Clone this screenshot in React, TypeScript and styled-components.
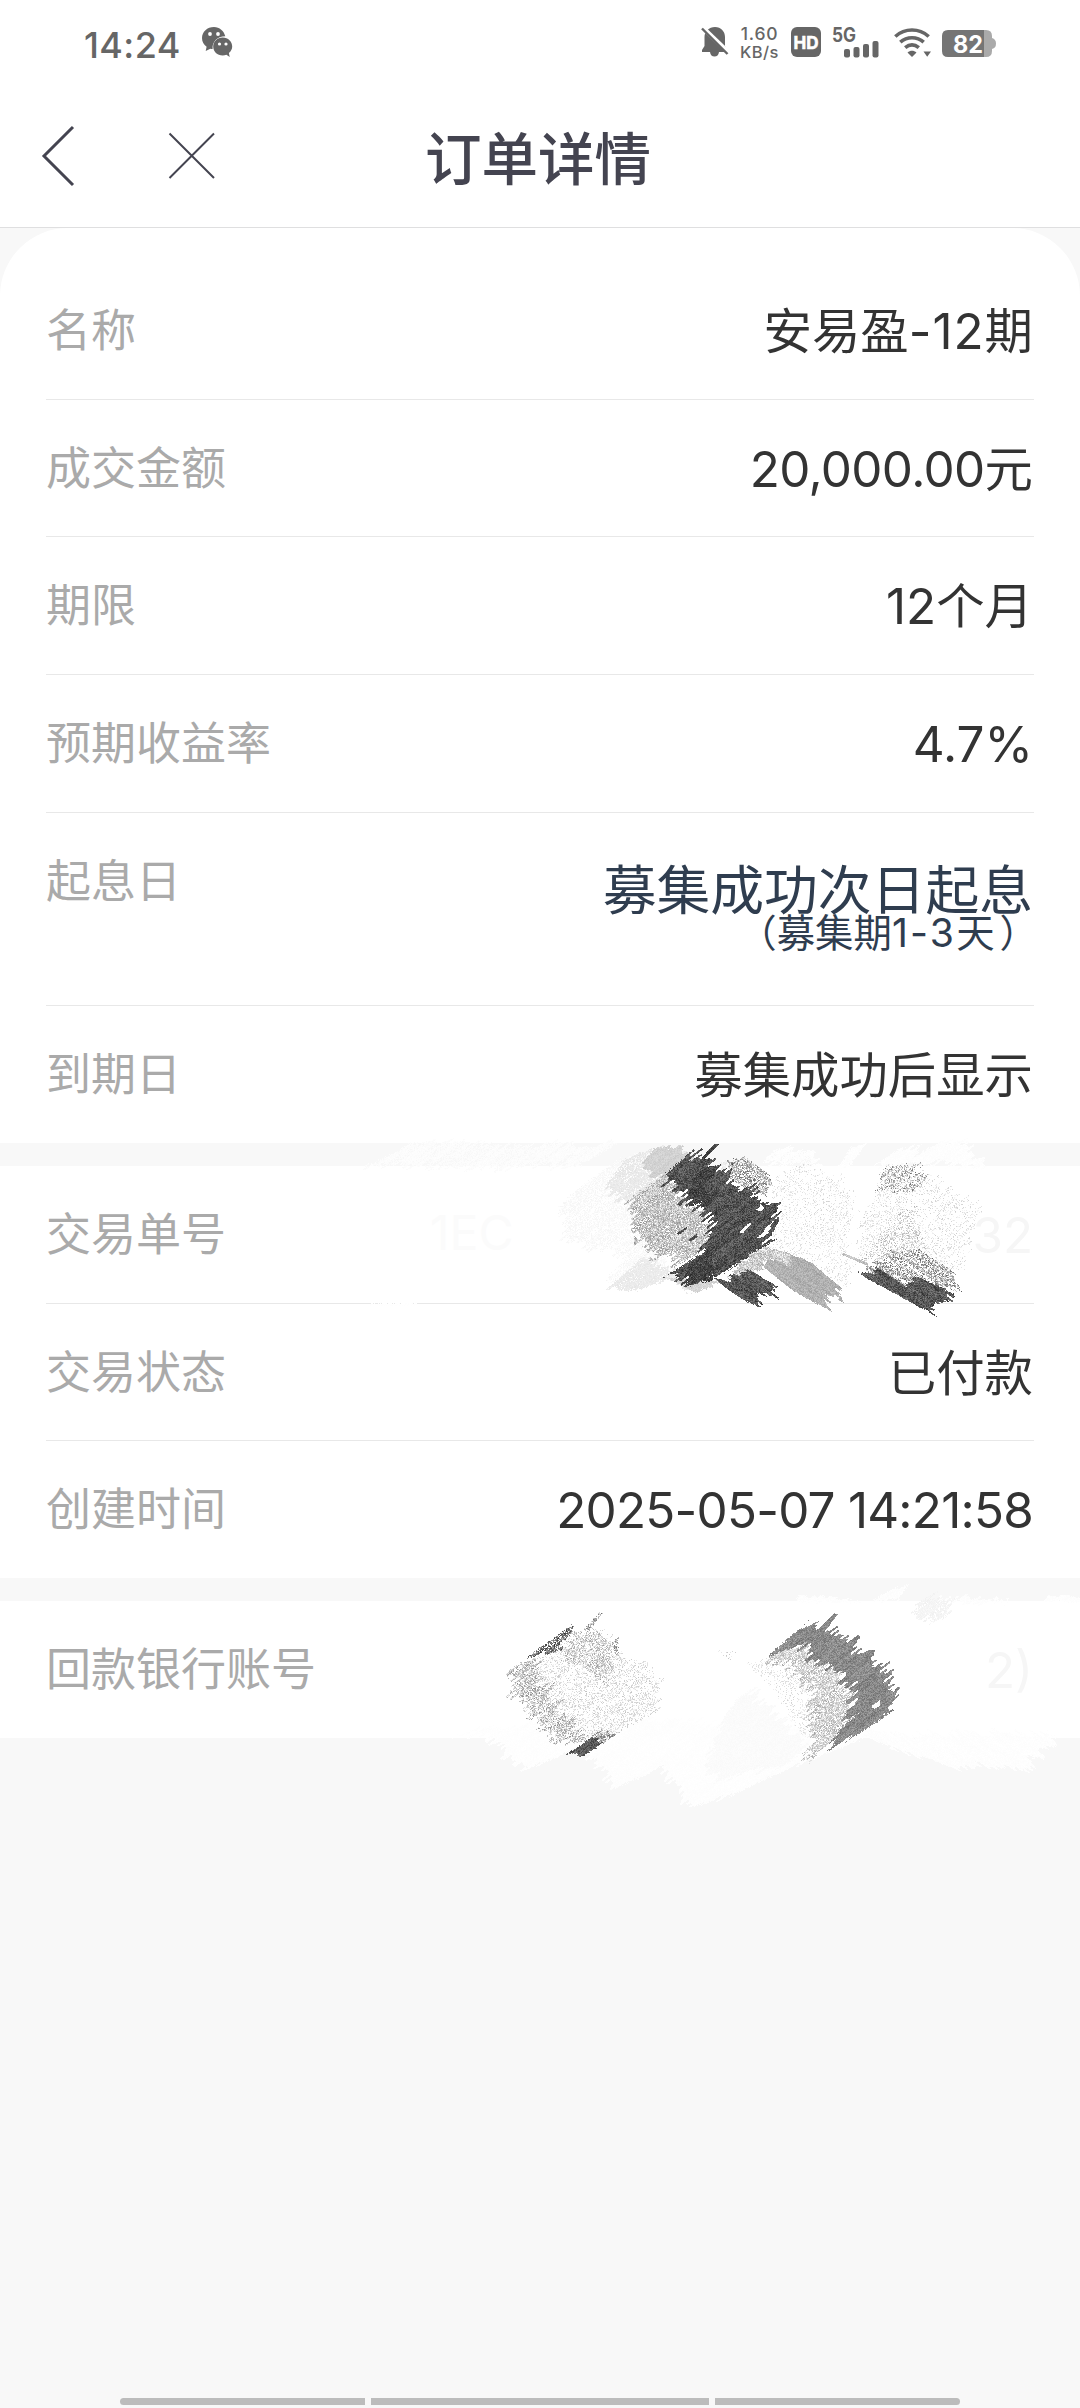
import React, { useMemo } from "react";
import styled, { createGlobalStyle } from "styled-components";

const Global = createGlobalStyle`
  * { box-sizing: border-box; }
  body { margin: 0; background: #f8f8f8; }
`;

const Screen = styled.div`
  width: 1080px;
  height: 2408px;
  display: flex;
  flex-direction: column;
  background: #f8f8f8;
  overflow: hidden;
  font-family: "Noto Sans CJK SC", "Noto Sans", sans-serif;
`;

const StatusBar = styled.div`
  height: 84px;
  flex: none;
  display: flex;
  align-items: flex-start;
  justify-content: space-between;
  padding: 27px 84px 0 84px;
  background: #fff;
  color: #666;
  font-family: Inter, sans-serif;
`;

const StatusGroup = styled.div<{ $gap: number }>`
  display: flex;
  align-items: flex-start;
  gap: ${(p) => p.$gap}px;
`;

const Clock = styled.span`
  width: 98px;
  font-size: 36px;
  line-height: 36px;
  font-weight: 500;
  letter-spacing: 0.4px;
  white-space: nowrap;
`;

const Speed = styled.div`
  width: 39px;
  margin-top: -4px;
  display: flex;
  flex-direction: column;
  align-items: center;
  font-size: 16.5px;
  line-height: 16px;
  font-weight: 500;
  letter-spacing: 0.4px;
  white-space: nowrap;
`;

const SpeedFigure = styled.span`
  font-size: 17.5px;
  line-height: 21px;
  letter-spacing: 0.8px;
`;

const Icon = styled.svg`
  display: block;
  flex: none;
`;

const Header = styled.header`
  height: 144px;
  flex: none;
  display: grid;
  grid-template-columns: 425px 1fr 429px;
  align-items: center;
  background: #fff;
  border-bottom: 1px solid #dfdfe0;
`;

const HeaderActions = styled.div`
  display: flex;
  align-items: center;
  gap: 93px;
  padding-left: 41px;
`;

const Title = styled.h1`
  margin: 0 0 2px;
  text-align: center;
  font-size: 56.5px;
  line-height: 80px;
  font-weight: 500;
  color: #444450;
  white-space: nowrap;
`;

const Section = styled.section<{ $first?: boolean }>`
  position: relative;
  flex: none;
  margin-bottom: 23px;
  padding: ${(p) => (p.$first ? "34px 46px 0" : "0 46px")};
  border-radius: ${(p) => (p.$first ? "68px 68px 0 0" : "0")};
  background: #fff;
`;

const Row = styled.div<{ $tall?: boolean; $last?: boolean }>`
  display: flex;
  justify-content: space-between;
  align-items: flex-start;
  height: ${(p) => (p.$tall ? 193.6 : p.$last ? 136.6 : 137.7)}px;
  border-bottom: ${(p) => (p.$last ? "none" : "1px solid #e8e8e8")};
`;

const Label = styled.span`
  font-size: 45px;
  line-height: 132px;
  color: #aaa;
`;

const Value = styled.span<{ $ghost?: boolean }>`
  padding-right: 1px;
  font-size: 48.4px;
  line-height: 133px;
  color: ${(p) => (p.$ghost ? "#f6f6f6" : "#333")};
  white-space: nowrap;
`;

const Num = styled.span<{ $track?: number }>`
  font-family: Inter, sans-serif;
  font-size: 1.02em;
  letter-spacing: ${(p) => p.$track ?? 0}px;
`;

const Start = styled.div`
  display: flex;
  flex-direction: column;
  align-items: flex-end;
  padding: 50px 1px 0 0;
  color: #2f3d4f;
  white-space: nowrap;
`;

const StartMain = styled.span`
  font-size: 53.8px;
  line-height: 48px;
`;

const StartNote = styled.span`
  font-size: 38.4px;
  line-height: 39px;
`;

const CloseParen = styled.span`
  padding-left: 5px;
  margin-right: -5px;
`;

const Scribble = styled.svg<{ $left: number; $top: number }>`
  position: absolute;
  left: ${(p) => p.$left}px;
  top: ${(p) => p.$top}px;
  pointer-events: none;
`;

const NavBar = styled.div`
  margin-top: auto;
  display: flex;
  justify-content: center;
  gap: 6px;
  padding-bottom: 3px;
`;

const NavPill = styled.div<{ $w: number; $side?: "l" | "r" }>`
  width: ${(p) => p.$w}px;
  height: 7px;
  background: #bcbcbc;
  border-radius: ${(p) => (p.$side === "l" ? "4px 0 0 4px" : p.$side === "r" ? "0 4px 4px 0" : "0")};
`;

/* ---- crayon strokes: grains of 3 units laid out inside jagged outlines ---- */

type Pt = [number, number];
interface Patch {
  pts: Pt[];
  lo: number;
  hi: number;
  density?: number;
  jag?: number;
  streak?: number;
  down?: boolean;
}

const rand = (a: number, b: number) => {
  let h = Math.imul(a | 0, 374761393) ^ Math.imul(b | 0, 668265263);
  h = Math.imul(h ^ (h >>> 13), 1274126177);
  return ((h ^ (h >>> 16)) >>> 0) / 4294967296;
};

const smooth = (v: number, seed: number) => {
  const i = Math.floor(v);
  const f = v - i;
  return rand(i, seed) * (1 - f) + rand(i + 1, seed) * f;
};

const inside = (x: number, y: number, pts: Pt[]) => {
  let hit = false;
  for (let i = 0, j = pts.length - 1; i < pts.length; j = i++) {
    const [xi, yi] = pts[i];
    const [xj, yj] = pts[j];
    if (yi > y !== yj > y && x < ((xj - xi) * (y - yi)) / (yj - yi) + xi) hit = !hit;
  }
  return hit;
};

const renderPatch = (p: Patch, seed: number) => {
  const levels = 7;
  const buckets: string[] = Array(levels).fill("");
  const xs = p.pts.map((q) => q[0]);
  const ys = p.pts.map((q) => q[1]);
  const jag = p.jag ?? 34;
  const density = p.density ?? 1;
  const streak = p.streak ?? 0.35;
  const dx = 0.8;
  const dy = p.down ? 0.6 : -0.6;
  const x0 = Math.floor((Math.min(...xs) - jag) / 3) * 3;
  const y0 = Math.floor((Math.min(...ys) - jag) / 3) * 3;
  for (let y = y0; y <= Math.max(...ys) + jag; y += 3) {
    for (let x = x0; x <= Math.max(...xs) + jag; x += 3) {
      const across = -x * dy + y * dx;
      const along = x * dx + y * dy;
      const side = Math.floor(along / 120);
      const fine = rand(Math.floor(across / 6), seed + side * 5) - 0.5;
      const coarse = smooth(across / 22, seed + 1) - 0.5;
      const push = (fine * 0.85 + coarse * 0.7) * jag * 1.25;
      const wob = (rand(x + seed, y * 3) - 0.5) * Math.min(5, jag / 4);
      if (!inside(x + dx * push + wob, y + dy * push + wob, p.pts)) continue;
      const line = smooth(across / 5 + smooth(along / 60, seed + 3), seed + 7 + Math.floor(along / 70));
      const keep = density >= 1 ? 1 : density * (1 - streak + streak * 2 * line);
      if (rand(x * 7 + seed, y * 13) > keep) continue;
      const r = rand(x + seed * 31, y * 3 + 5);
      const tone = Math.min(levels - 1, Math.floor((r * 0.7 + line * 0.3) * levels));
      buckets[tone] += `M${x} ${y}h3v3h-3z`;
    }
  }
  return buckets.map((d, i) => {
    const c = Math.round(p.lo + ((p.hi - p.lo) * i) / (levels - 1));
    return { d, fill: `rgb(${c},${c},${c})` };
  });
};

const orderScribble: Patch[] = [
  { pts: [[-590, 88], [-440, 20], [-100, 24], [170, 24], [60, 90], [-300, 92]], lo: 250, hi: 254, density: 0.85 },
  { pts: [[600, 88], [640, 40], [740, 45], [790, 88]], lo: 252, hi: 255, density: 0.9 },
  { pts: [[830, 88], [880, 25], [910, 30], [870, 88]], lo: 252, hi: 255 },
  { pts: [[940, 88], [1020, 35], [1080, 24], [1060, 60], [1130, 24], [1210, 24], [1290, 88]], lo: 252, hi: 255 },
  { pts: [[-570, 498], [-430, 498], [-430, 508], [-570, 508]], lo: 254, hi: 255, density: 0.7, jag: 4 },
  { pts: [[5, 205], [60, 150], [190, 60], [300, 40], [330, 200], [300, 330], [330, 400], [240, 460], [140, 430], [200, 360], [60, 330], [5, 290]], lo: 244, hi: 254, density: 0.65, streak: 0.6 },
  { pts: [[140, 145], [180, 75], [280, 35], [400, 60], [300, 150], [190, 205], [160, 180]], lo: 227, hi: 241, density: 0.92, streak: 0.5 },
  { pts: [[150, 450], [250, 360], [330, 385], [400, 465], [330, 430], [210, 465]], lo: 229, hi: 241, density: 0.95, jag: 28 },
  { pts: [[320, 425], [480, 430], [410, 472]], lo: 200, hi: 226, jag: 14, down: true },
  { pts: [[245, 80], [290, 30], [370, 30], [400, 70], [310, 130]], lo: 200, hi: 220, jag: 28 },
  { pts: [[195, 195], [320, 112], [350, 170], [440, 220], [440, 330], [345, 385], [270, 350], [215, 245]], lo: 148, hi: 244, density: 0.96, jag: 40 },
  { pts: [[635, 120], [740, 78], [850, 135], [890, 220], [850, 320], [880, 440], [800, 445], [740, 370], [620, 350], [655, 220]], lo: 210, hi: 253, density: 0.24, streak: 0.8 },
  { pts: [[600, 385], [650, 350], [750, 375], [850, 460], [845, 495], [790, 488], [800, 520], [700, 465]], lo: 158, hi: 198, jag: 34, down: true },
  { pts: [[510, 70], [560, 65], [632, 118], [618, 180], [560, 160], [500, 120]], lo: 110, hi: 252, density: 0.75, jag: 18, down: true },
  { pts: [[295, 130], [385, 50], [398, 65], [425, 58], [450, 85], [510, 90], [530, 140], [600, 185], [635, 225], [632, 320], [500, 400], [375, 450], [322, 415], [430, 348], [445, 290], [430, 210], [350, 165]], lo: 48, hi: 122, jag: 50 },
  { pts: [[425, 62], [462, 22], [475, 24], [420, 78]], lo: 50, hi: 105, jag: 0 },
  { pts: [[615, 285], [650, 242], [658, 246], [640, 285]], lo: 55, hi: 115, jag: 6 },
  { pts: [[395, 110], [450, 95], [450, 210], [425, 215], [390, 190]], lo: 38, hi: 88, density: 0.8, jag: 40 },
  { pts: [[370, 400], [430, 350], [490, 390], [460, 430], [390, 435]], lo: 38, hi: 88, density: 0.8, jag: 36 },
  { pts: [[350, 205], [366, 188], [372, 192], [358, 210]], lo: 55, hi: 110, jag: 3 },
  { pts: [[350, 290], [376, 272], [380, 276], [356, 295]], lo: 55, hi: 110, jag: 3 },
  { pts: [[385, 310], [408, 292], [412, 300], [392, 315]], lo: 55, hi: 110, jag: 3 },
  { pts: [[535, 288], [568, 258], [572, 262], [548, 290]], lo: 240, hi: 255, jag: 2 },
  { pts: [[588, 305], [628, 270], [632, 275], [600, 305]], lo: 250, hi: 255, jag: 2 },
  { pts: [[475, 80], [495, 72], [500, 95], [485, 100]], lo: 225, hi: 255, jag: 8 },
  { pts: [[500, 430], [530, 385], [620, 335], [695, 355], [690, 390], [630, 370], [580, 415]], lo: 165, hi: 255, jag: 18, down: true },
  { pts: [[460, 425], [510, 425], [580, 410], [652, 450], [645, 482], [600, 480], [588, 512], [510, 465]], lo: 50, hi: 128, jag: 30, down: true },
  { pts: [[965, 92], [1070, 92], [1160, 145], [1250, 215], [1230, 320], [1215, 405], [1150, 400], [1060, 350], [890, 370], [900, 275], [945, 180]], lo: 205, hi: 253, density: 0.24, streak: 0.9 },
  { pts: [[900, 370], [1045, 200], [1080, 250], [1090, 360], [1000, 370]], lo: 165, hi: 248, density: 0.3, streak: 0.9 },
  { pts: [[965, 92], [1070, 88], [1095, 125], [1050, 175], [945, 160]], lo: 110, hi: 245, density: 0.42, streak: 0.8, jag: 28 },
  { pts: [[900, 400], [1000, 350], [1090, 350], [1195, 415], [1200, 465], [1100, 440], [1020, 440]], lo: 95, hi: 252, density: 0.68, streak: 0.6, jag: 34, down: true },
  { pts: [[850, 350], [920, 378], [925, 390], [845, 356]], lo: 170, hi: 225, jag: 4, down: true },
  { pts: [[895, 412], [965, 402], [1035, 450], [1080, 425], [1175, 468], [1168, 505], [1130, 502], [1118, 533], [1020, 482]], lo: 50, hi: 128, jag: 30, down: true },
];

const accountScribble: Patch[] = [
  { pts: [[-140, 405], [-20, 380], [300, 350], [900, 380], [1094, 410], [900, 490], [690, 585], [580, 620], [480, 500], [345, 565], [235, 440], [80, 508], [-30, 410]], lo: 253, hi: 255 },
  { pts: [[1080, 400], [1660, 400], [1650, 440], [1572, 515], [1450, 490], [1412, 510], [1180, 450]], lo: 252, hi: 255, down: true },
  { pts: [[880, 5], [890, -12], [980, -12], [1100, 5]], lo: 252, hi: 255, jag: 14 },
  { pts: [[1110, 5], [1150, -20], [1225, -50], [1190, 5]], lo: 252, hi: 255, jag: 26 },
  { pts: [[1300, 5], [1310, -12], [1480, -10], [1530, 5]], lo: 252, hi: 255, jag: 26 },
  { pts: [[1630, 5], [1640, -15], [1740, -10], [1740, 5]], lo: 252, hi: 255, jag: 10 },
  { pts: [[1235, 15], [1300, -20], [1350, -10], [1340, 50], [1290, 68]], lo: 240, hi: 249, density: 0.85, jag: 36 },
  { pts: [[620, 470], [690, 310], [750, 270], [930, 430], [860, 490], [640, 540]], lo: 249, hi: 253, jag: 40 },
  { pts: [[50, 215], [200, 110], [300, 95], [370, 170], [455, 195], [480, 260], [475, 330], [350, 400], [290, 420], [180, 420], [100, 340], [60, 280]], lo: 195, hi: 252, density: 0.36, streak: 0.8 },
  { pts: [[30, 205], [100, 165], [125, 240], [165, 320], [225, 390], [290, 420], [165, 430], [105, 355], [40, 270]], lo: 140, hi: 248, density: 0.66, streak: 0.5, jag: 40 },
  { pts: [[210, 90], [300, 95], [350, 150], [320, 260], [240, 190], [190, 190]], lo: 155, hi: 248, density: 0.52, streak: 0.6, jag: 30, down: true },
  { pts: [[68, 178], [155, 118], [215, 72], [222, 92], [185, 125], [178, 155], [120, 158]], lo: 50, hi: 190, density: 0.9, jag: 20 },
  { pts: [[250, 85], [298, 35], [308, 37], [265, 92]], lo: 110, hi: 240, density: 0.8, jag: 4 },
  { pts: [[335, 125], [358, 108], [352, 158], [338, 152]], lo: 110, hi: 240, density: 0.6, jag: 6 },
  { pts: [[270, 405], [300, 390], [350, 402], [310, 428]], lo: 100, hi: 235, density: 0.8, jag: 14 },
  { pts: [[200, 460], [272, 412], [308, 428], [245, 468]], lo: 62, hi: 125, jag: 14 },
  { pts: [[640, 150], [720, 148], [690, 182]], lo: 200, hi: 245, density: 0.1, jag: 4 },
  { pts: [[740, 190], [850, 170], [960, 320], [950, 420], [900, 400], [820, 270]], lo: 210, hi: 252, density: 0.25, streak: 0.8, down: true },
  { pts: [[805, 168], [880, 115], [950, 180], [1010, 205], [1060, 270], [1055, 350], [985, 430], [945, 472], [905, 465], [945, 420], [940, 320], [930, 250]], lo: 165, hi: 253, density: 0.85, jag: 44 },
  { pts: [[815, 158], [915, 70], [950, 75], [1005, 100], [1055, 130], [1105, 178], [1155, 205], [1180, 260], [1160, 345], [1080, 395], [980, 450], [1000, 405], [1055, 350], [1050, 270], [1000, 205], [935, 190], [890, 135]], lo: 110, hi: 165, jag: 44 },
  { pts: [[945, 95], [1002, 38], [1012, 42], [970, 95]], lo: 110, hi: 160, jag: 3 },
  { pts: [[1165, 290], [1192, 258], [1196, 264], [1180, 292]], lo: 110, hi: 165, jag: 4 },
  { pts: [[1112, 318], [1138, 298], [1136, 318], [1120, 326]], lo: 250, hi: 255, jag: 4 },
];

const Crayon = ({ patches, left, top, width, height, viewBox }: {
  patches: Patch[]; left: number; top: number; width: number; height: number; viewBox: string;
}) => {
  const drawn = useMemo(() => patches.map((p, i) => renderPatch(p, i * 17 + 11)), [patches]);
  return (
    <Scribble $left={left} $top={top} width={width} height={height} viewBox={viewBox} shapeRendering="crispEdges">
      {drawn.map((levels, i) => (
        <g key={i}>
          {levels.map((l, j) => (l.d ? <path key={j} d={l.d} fill={l.fill} /> : null))}
        </g>
      ))}
    </Scribble>
  );
};

const GhostLead = styled.span`
  flex: 1;
  padding-left: 204px;
  font-family: Inter, sans-serif;
  font-size: 48px;
  line-height: 133px;
  color: #fbfbfb;
`;

const StatusText = styled.text`
  font-family: Inter, sans-serif;
  font-weight: 700;
`;

const WeChat = () => (
  <Icon width="31" height="31" viewBox="0 0 31 31">
    <path fill="#666" d="M12 0C5.200 0 0 4.800 0 11c0 3.700 1.800 6.700 4.600 8.800L3.700 24l4.600-2.300c.8.200 1.600.3 2.300.3C10 15 15 9.500 23.300 9.300 22 4 17.500 0 12 0z" />
    <circle cx="8" cy="7" r="1.900" fill="#fff" /><circle cx="16" cy="7" r="1.900" fill="#fff" />
    <path fill="#666" d="M20.700 10.500c-5.400 0-9.500 4-9.500 9s4.100 9 9.500 9c1.300 0 2.500-.2 3.700-.7l3.300 2.200-.8-4c2-1.600 3.300-3.900 3.300-6.500 0-5-4.100-9-9.500-9z" />
    <circle cx="17.500" cy="17" r="1.600" fill="#fff" /><circle cx="24" cy="17" r="1.600" fill="#fff" />
  </Icon>
);

const BellOff = () => (
  <Icon width="28" height="30" viewBox="0 0 28 30">
    <path fill="#666" d="M14 0c6 0 10 4.500 10 10v9l2.500 5v1H18c-.4 3-2 4.500-4.500 4.500S9.400 28 9 25H1v-2l2.500-4V10C3.500 4.500 8 0 14 0z" />
    <path d="M-1 -2L27 25" stroke="#fff" strokeWidth="4.500" />
    <path d="M1 1.500L26.500 27" stroke="#666" strokeWidth="2.400" />
  </Icon>
);

const Hd = () => (
  <Icon width="30" height="30" viewBox="0 0 30 30">
    <rect width="30" height="30" rx="6" fill="#666" />
    <StatusText x="15" y="21.500" fontSize="18" fill="#fff" stroke="#fff" strokeWidth=".6" textAnchor="middle" textLength="25" lengthAdjust="spacingAndGlyphs">HD</StatusText>
  </Icon>
);

const Signal = () => (
  <Icon width="50" height="31" viewBox="2 0 50 31">
    <StatusText x="2" y="14.500" fontSize="19.500" fill="#666" textLength="24" lengthAdjust="spacingAndGlyphs">5G</StatusText>
    <rect x="14" y="22" width="6" height="8.500" rx="2" fill="#666" />
    <rect x="23.500" y="20" width="6" height="10.500" rx="2" fill="#666" />
    <rect x="33" y="17" width="6" height="13.500" rx="2" fill="#666" />
    <rect x="42.500" y="14" width="6" height="16.500" rx="2" fill="#666" />
  </Icon>
);

const Wifi = () => (
  <Icon width="37" height="30" viewBox="0 0 37 30">
    <g fill="none" stroke="#666" strokeWidth="3.600">
      <path d="M1.300 9.500C11 .9 25 .9 34.700 9.500" />
      <path d="M6.300 15.200C13 9.200 23 9.200 29.700 15.200" />
      <path d="M11.200 20.700C15.500 17 20.500 17 24.800 20.700" />
    </g>
    <path fill="#666" d="M13.500 25.500c2.800-2.300 6.200-2.300 9 0L18 30zM29.500 24.500H37L33.200 29.800z" />
  </Icon>
);

const Battery = () => (
  <Icon width="54" height="30" viewBox="0 0 54 30">
    <path fill="#aaa" d="M40 3h4q6 0 6 6v2q4 1 4 5.500T50 22v2q0 6-6 6h-4z" />
    <path fill="#757575" d="M6 3h36v27H6q-6 0-6-6V9q0-6 6-6z" />
    <StatusText x="26" y="25.500" fontSize="24.500" fill="#fff" textAnchor="middle" textLength="30" lengthAdjust="spacingAndGlyphs">82</StatusText>
  </Icon>
);

export default function App() {
  return (
    <Screen>
      <Global />
      <StatusBar>
        <StatusGroup $gap={20}>
          <Clock>14:24</Clock>
          <WeChat />
        </StatusGroup>
        <StatusGroup $gap={11.5}>
          <BellOff />
          <Speed><SpeedFigure>1.60</SpeedFigure><span>KB/s</span></Speed>
          <Hd />
          <Signal />
          <Wifi />
          <Battery />
        </StatusGroup>
      </StatusBar>
      <Header>
        <HeaderActions>
          <Icon width="34" height="62" viewBox="0 0 34 62">
            <path d="M32 2L3 31L32 60" fill="none" stroke="#444450" strokeWidth="3" />
          </Icon>
          <Icon width="48" height="48" viewBox="0 0 48 48">
            <path d="M1.500 1.500L46 46M46 1.500L1.500 46" stroke="#444450" strokeWidth="2" />
          </Icon>
        </HeaderActions>
        <Title>订单详情</Title>
        <span />
      </Header>

      <Section $first>
        <Row><Label>名称</Label><Value>安易盈<Num $track={1}>-12</Num>期</Value></Row>
        <Row><Label>成交金额</Label><Value><Num $track={-0.6}>20,000.00</Num>元</Value></Row>
        <Row><Label>期限</Label><Value><Num>12</Num>个月</Value></Row>
        <Row><Label>预期收益率</Label><Value><Num>4.7%</Num></Value></Row>
        <Row $tall>
          <Label>起息日</Label>
          <Start>
            <StartMain>募集成功次日起息</StartMain>
            <StartNote>（募集期<Num $track={2.2}>1-3</Num>天<CloseParen>）</CloseParen></StartNote>
          </Start>
        </Row>
        <Row $last><Label>到期日</Label><Value>募集成功后显示</Value></Row>
      </Section>

      <Section>
        <Row><Label>交易单号</Label><GhostLead>1EC</GhostLead><Value $ghost><Num>32</Num></Value></Row>
        <Row><Label>交易状态</Label><Value>已付款</Value></Row>
        <Row $last><Label>创建时间</Label><Value><Num $track={-0.75}>2025-05-07 14:21:58</Num></Value></Row>
        <Crayon patches={orderScribble} left={360} top={-30} width={720} height={184} viewBox="-600 0 2160 552" />
      </Section>

      <Section>
        <Row $last><Label>回款银行账号</Label><Value $ghost><Num>2)</Num></Value></Row>
        <Crayon patches={accountScribble} left={400} top={-23} width={680} height={232} viewBox="-300 -66 2040 696" />
      </Section>

      <NavBar>
        <NavPill $w={245} $side="l" />
        <NavPill $w={338} />
        <NavPill $w={245} $side="r" />
      </NavBar>
    </Screen>
  );
}
